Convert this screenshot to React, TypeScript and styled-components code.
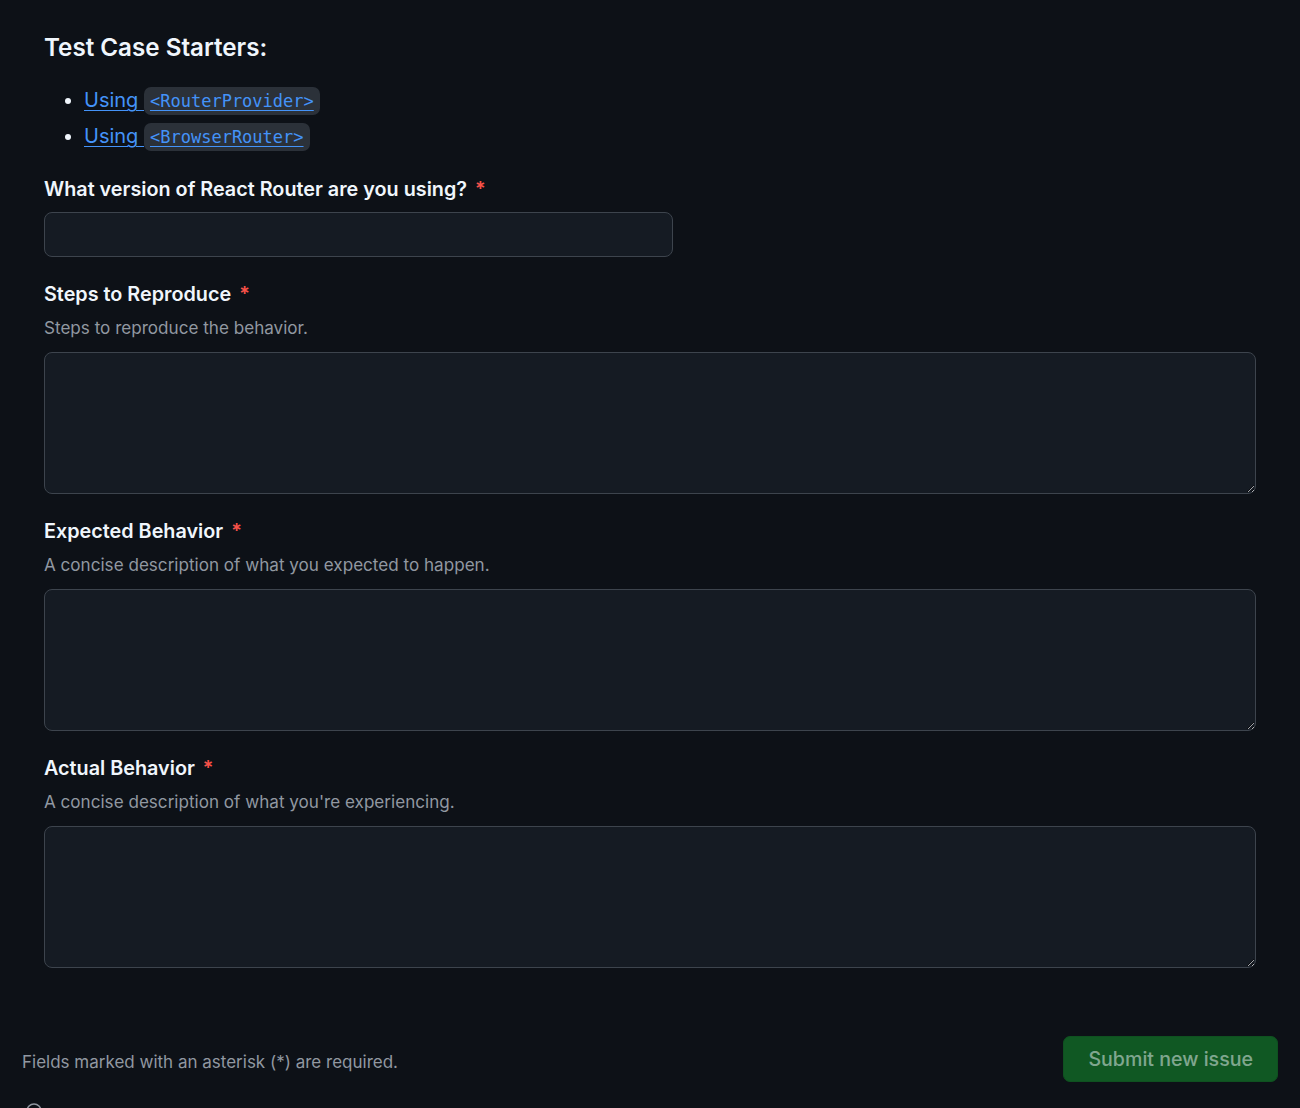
import React from "react";
import styled, { createGlobalStyle } from "styled-components";

const GlobalStyle = createGlobalStyle`
  html, body {
    margin: 0;
    padding: 0;
    background: #0d1117;
    color-scheme: dark;
  }
  body {
    font-family: Inter, "Noto Sans", "Liberation Sans", sans-serif;
    color: #f0f6fc;
    overflow: hidden;
  }
`;

const Page = styled.div`
  padding: 0 22px;
  height: 1108px;
  overflow: hidden;
`;

const FormBody = styled.div`
  padding: 32px 22px 0 22px;
`;

const Heading = styled.h3`
  margin: 0 0 20px 0;
  font-size: 24.2px;
  line-height: 31px;
  font-weight: 600;
  color: #f0f6fc;
`;

const StarterList = styled.ul`
  margin: 0 0 21px 0;
  padding-left: 40px;
  list-style: disc;
  color: #f0f6fc;
`;

const StarterItem = styled.li`
  font-size: 20px;
  line-height: 35px;
`;

const StarterLink = styled.a`
  color: #4493f8;
  text-decoration: underline;
  text-underline-offset: 3px;
  text-decoration-thickness: 1px;
`;

const Code = styled.code`
  font-family: "DejaVu Sans Mono", "Liberation Mono", monospace;
  font-size: 17px;
  background: #2b3139;
  border-radius: 7px;
  padding: 4px 6px;
  margin-left: 0px;
`;

const Group = styled.div`
  margin-bottom: 24px;
`;

const Label = styled.label`
  display: block;
  font-size: 19.8px;
  line-height: 26px;
  font-weight: 600;
  color: #f0f6fc;
  margin-bottom: 10px;
`;

const Required = styled.span`
  color: #f85149;
  margin-left: 8px;
`;

const Note = styled.p`
  margin: 0 0 13px 0;
  font-size: 17.1px;
  line-height: 22px;
  color: #9198a1;
`;

const TextInput = styled.input`
  display: block;
  box-sizing: border-box;
  width: 629px;
  height: 45px;
  background: #151b23;
  border: 1px solid #3d444d;
  border-radius: 8px;
  color: #f0f6fc;
  font: inherit;
  outline: none;
`;

const TextArea = styled.textarea`
  display: block;
  box-sizing: border-box;
  width: 100%;
  height: 142px;
  background: #151b23;
  border: 1px solid #3d444d;
  border-radius: 8px;
  color: #f0f6fc;
  font: inherit;
  outline: none;
  resize: vertical;
`;

const Footer = styled.div`
  display: flex;
  align-items: center;
  justify-content: space-between;
  margin-top: 68px;
`;

const FooterNote = styled.p`
  margin: 0;
  font-size: 17px;
  line-height: 24px;
  color: #9198a1;
  padding-top: 5px;
`;

const SubmitButton = styled.button`
  box-sizing: border-box;
  height: 46px;
  padding: 0 24px;
  background: #105823;
  border: 1px solid #0f5120;
  border-radius: 7px;
  color: rgba(240, 246, 252, 0.5);
  font-family: Inter, "Noto Sans", sans-serif;
  font-size: 19.6px;
  font-weight: 500;
`;

const InfoRow = styled.div`
  margin-top: 21px;
  padding-left: 4px;
  color: #9198a1;
  line-height: 0;
`;

const fields = [
  { label: "Steps to Reproduce", note: "Steps to reproduce the behavior." },
  { label: "Expected Behavior", note: "A concise description of what you expected to happen." },
  { label: "Actual Behavior", note: "A concise description of what you're experiencing." },
];

export default function App() {
  return (
    <>
      <GlobalStyle />
      <Page>
        <FormBody>
          <Heading>Test Case Starters:</Heading>
          <StarterList>
            <StarterItem>
              <StarterLink href="#">
                Using <Code>&lt;RouterProvider&gt;</Code>
              </StarterLink>
            </StarterItem>
            <StarterItem>
              <StarterLink href="#">
                Using <Code>&lt;BrowserRouter&gt;</Code>
              </StarterLink>
            </StarterItem>
          </StarterList>
          <Group>
            <Label>
              What version of React Router are you using?<Required>*</Required>
            </Label>
            <TextInput type="text" />
          </Group>
          {fields.map((f) => (
            <Group key={f.label}>
              <Label>
                {f.label}
                <Required>*</Required>
              </Label>
              <Note>{f.note}</Note>
              <TextArea />
            </Group>
          ))}
        </FormBody>
        <Footer>
          <FooterNote>Fields marked with an asterisk (*) are required.</FooterNote>
          <SubmitButton disabled>Submit new issue</SubmitButton>
        </Footer>
        <InfoRow>
          <svg width="16" height="16" viewBox="0 0 16 16" fill="none">
            <circle cx="8" cy="8" r="7" stroke="currentColor" strokeWidth="1.5" />
          </svg>
        </InfoRow>
      </Page>
    </>
  );
}
